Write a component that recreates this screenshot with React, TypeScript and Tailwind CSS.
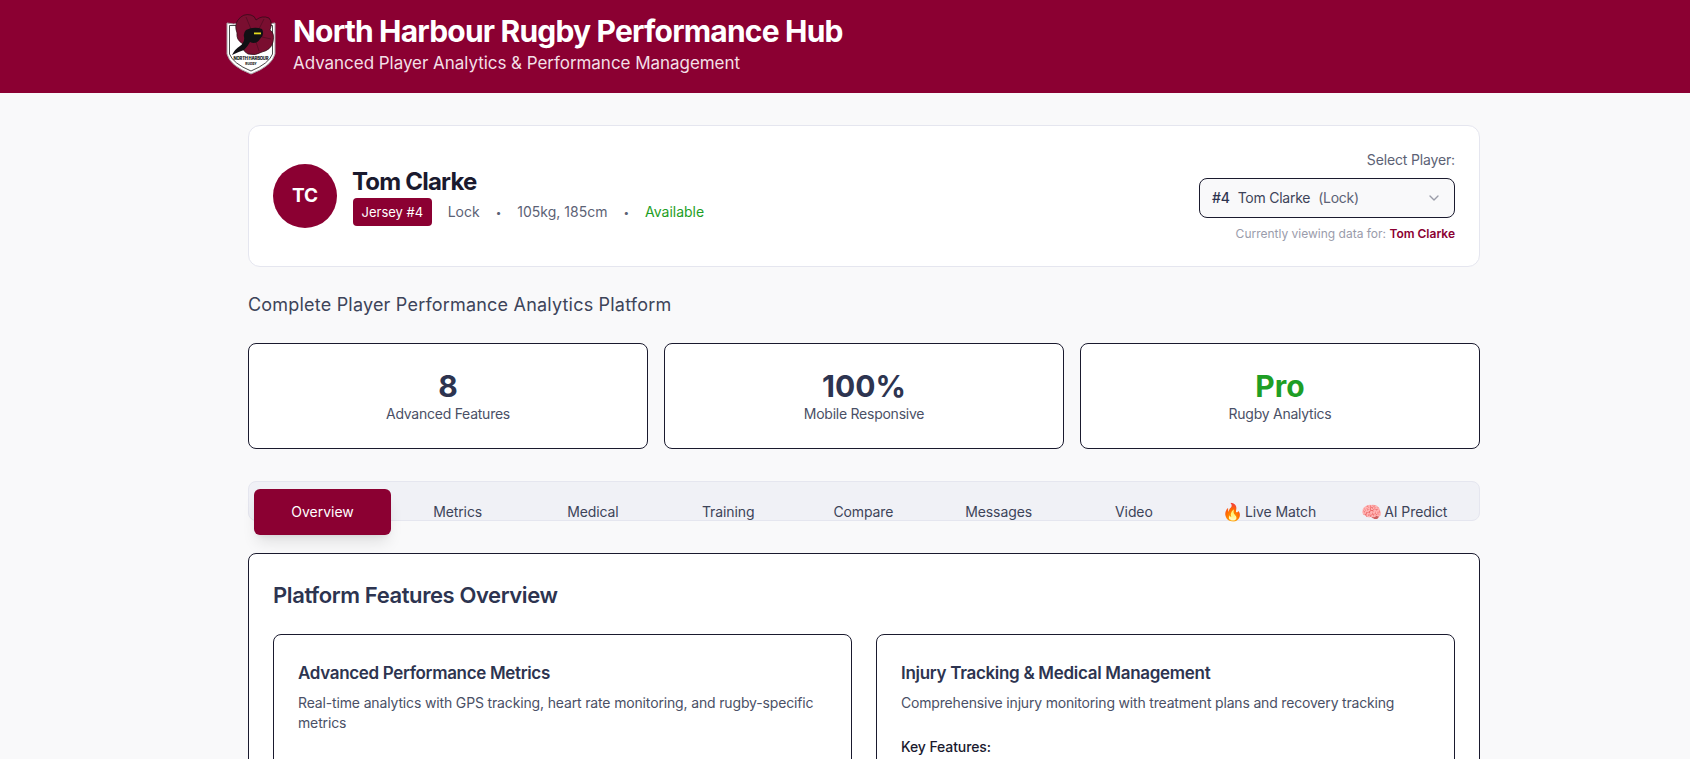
function Logo() {
  return (
    <svg width="50" height="61" viewBox="0 0 50 61" className="shrink-0">
      <path d="M1 9 Q8 11 14 9 L36 9 Q42 11 49 9 L49 40 Q46 52 25 60 Q4 52 1 40 Z" fill="#fff" stroke="#a8a0a4" strokeWidth="1" />
      <path d="M3.5 11.5 L46.5 11.5 L46.5 40 Q43 49.5 25 57 Q7 49.5 3.5 40 Z" fill="#fff" stroke="#1c1c1c" strokeWidth="0.8" />
      <path d="M12 6 Q17 -1 25 1 Q29 2 30 6 Q36 1 43 4 Q47 9 44 16 Q49 19 47 28 Q45 36 36 38 Q30 42 22 40 Q15 36 17 30 Q10 26 11 19 Q8 11 12 6 Z" fill="#7a0e30" stroke="#2a0c16" strokeWidth="0.7" />
      <path d="M20 3 L25 15 M38 5 L33 15 M45 25 L36 23 M33 37 L30 28" stroke="#3a0a1a" strokeWidth="0.5" fill="none" />
      <path d="M20 16 Q28 12 36 15 Q39 21 34 25 Q30 31 24 28 Q22 32 18 36 Q12 38 6 41 Q9 35 14 32 Q19 28 18 23 Q17 19 20 16 Z" fill="#111014" />
      <rect x="28" y="18.5" width="7" height="1.8" fill="#e6dc1e" />
      <text x="25" y="46" textAnchor="middle" fontSize="4.2" fontWeight="800" fill="#111" fontFamily="Inter" textLength="35">NORTH HARBOUR</text>
      <text x="25" y="50.5" textAnchor="middle" fontSize="3.2" fontWeight="800" fill="#111" fontFamily="Inter">RUGBY</text>
    </svg>
  );
}
function Stat({ v, l, green }: { v: string; l: string; green?: boolean }) {
  return (
    <div className="flex-1 h-[106px] bg-white border border-[#1a1a2e] rounded-lg flex flex-col items-center justify-center">
      <div className={`text-[30px] leading-[36px] font-bold ${green ? "text-[#1e9e25]" : "text-[#2d3450]"}`}>{v}</div>
      <div className="text-sm leading-5 tracking-[-0.25px] text-[#4a5066]">{l}</div>
    </div>
  );
}
const tabs: [string, string][] = [["", "Metrics"], ["", "Medical"], ["", "Training"], ["", "Compare"], ["", "Messages"], ["", "Video"], ["🔥", "Live Match"], ["🧠", "AI Predict"]];
export default function App() {
  return (
    <div className="h-[759px] overflow-hidden bg-[#f9f9fa] font-['Inter',sans-serif]">
      <header className="h-[93px] bg-[#8b0032] flex items-center pl-[226px] pb-1 gap-[17px]">
        <Logo />
        <div>
          <h1 className="text-[30px] leading-[36px] font-bold tracking-[-0.8px] text-white">North Harbour Rugby Performance Hub</h1>
          <p className="text-[17px] leading-7 tracking-[-0.04px] text-[#f3dfe6]">Advanced Player Analytics &amp; Performance Management</p>
        </div>
      </header>
      <main className="w-[1232px] ml-[248px] pt-8">
        <section className="h-[142px] bg-white border border-[#e5e6ef] rounded-xl flex items-center justify-between px-6">
          <div className="flex items-center gap-4">
            <div className="w-16 h-16 rounded-full bg-[#8b0032] text-white font-bold text-[19px] flex items-center justify-center">TC</div>
            <div>
              <div className="text-2xl font-bold leading-8 tracking-[-0.8px] ml-[-1px] text-[#1a1a2e]">Tom Clarke</div>
              <div className="flex items-center gap-4 text-sm leading-5 text-[#5c6275]">
                <span className="bg-[#8b0032] text-white rounded px-[8.5px] py-1 text-[13px]">Jersey #4</span>
                <span>Lock</span><span className="text-[10px]">•</span><span>105kg, 185cm</span><span className="text-[10px]">•</span>
                <span className="text-[#1e9e25]">Available</span>
              </div>
            </div>
          </div>
          <div className="flex flex-col items-end">
            <div className="text-sm leading-5 tracking-[-0.15px] text-[#5c6275] mb-2">Select Player:</div>
            <div className="w-[256px] h-[40px] border border-[#1a1a2e] rounded-lg bg-[#f9f9fa] flex items-center justify-between px-3 text-sm tracking-[-0.25px] text-[#3d4459]">
              <span className="flex gap-2"><span className="font-medium text-[#2d3450]">#4</span><span>Tom Clarke</span><span className="text-[#5c6275]">(Lock)</span></span>
              <svg width="16" height="16" viewBox="0 0 24 24" fill="none" stroke="#9a9ca8" strokeWidth="2" strokeLinecap="round" strokeLinejoin="round"><path d="m6 9 6 6 6-6" /></svg>
            </div>
            <div className="text-xs leading-4 text-[#9a9cab] mt-2">Currently viewing data for: <span className="font-semibold text-[#8b0032]">Tom Clarke</span></div>
          </div>
        </section>
        <p className="text-lg leading-7 tracking-[0.2px] text-[#3d4459] mt-6">Complete Player Performance Analytics Platform</p>
        <div className="flex gap-4 mt-6">
          <Stat v="8" l="Advanced Features" />
          <Stat v="100%" l="Mobile Responsive" />
          <Stat v="Pro" l="Rugby Analytics" green />
        </div>
        <nav className="h-[40px] mt-8 bg-[#f0f1f6] border border-[#e5e6ef] rounded-lg flex pl-[5px] pr-[7px] text-sm leading-5 tracking-[-0.1px] text-[#3d4459]">
          <div className="w-[137px] h-[46px] mt-[7px] mr-[-1px] shrink-0 bg-[#8b0032] text-white tracking-normal rounded-md shadow-lg flex items-center justify-center relative z-10">Overview</div>
          {tabs.map(([e, t]) => (
            <div key={t} className="flex-1 flex justify-center items-start gap-[2px] pt-5">
              {e && <span className="text-[17px] leading-5">{e}</span>}
              <span>{t}</span>
            </div>
          ))}
        </nav>
        <section className="mt-8 h-[400px] bg-white border border-[#1a1a2e] rounded-lg px-6 pt-[25px]">
          <h2 className="text-[22px] leading-8 font-semibold tracking-[-0.4px] text-[#2d3450]">Platform Features Overview</h2>
          <div className="grid grid-cols-2 gap-6 mt-[23px]">
            <div className="border border-[#1a1a2e] rounded-lg p-6 h-[300px]">
              <h3 className="text-[17px] leading-7 font-semibold tracking-[-0.33px] text-[#2d3450]">Advanced Performance Metrics</h3>
              <p className="text-sm leading-5 tracking-[-0.15px] mt-[6px] text-[#4a5066]">Real-time analytics with GPS tracking, heart rate monitoring, and rugby-specific metrics</p>
            </div>
            <div className="border border-[#1a1a2e] rounded-lg p-6 h-[300px]">
              <h3 className="text-[17px] leading-7 font-semibold tracking-[-0.3px] text-[#2d3450]">Injury Tracking &amp; Medical Management</h3>
              <p className="text-sm leading-5 tracking-[-0.18px] mt-[6px] text-[#4a5066]">Comprehensive injury monitoring with treatment plans and recovery tracking</p>
              <p className="text-sm leading-5 mt-6 font-medium tracking-[-0.1px] text-[#1a1a2e]">Key Features:</p>
            </div>
          </div>
        </section>
      </main>
    </div>
  );
}
